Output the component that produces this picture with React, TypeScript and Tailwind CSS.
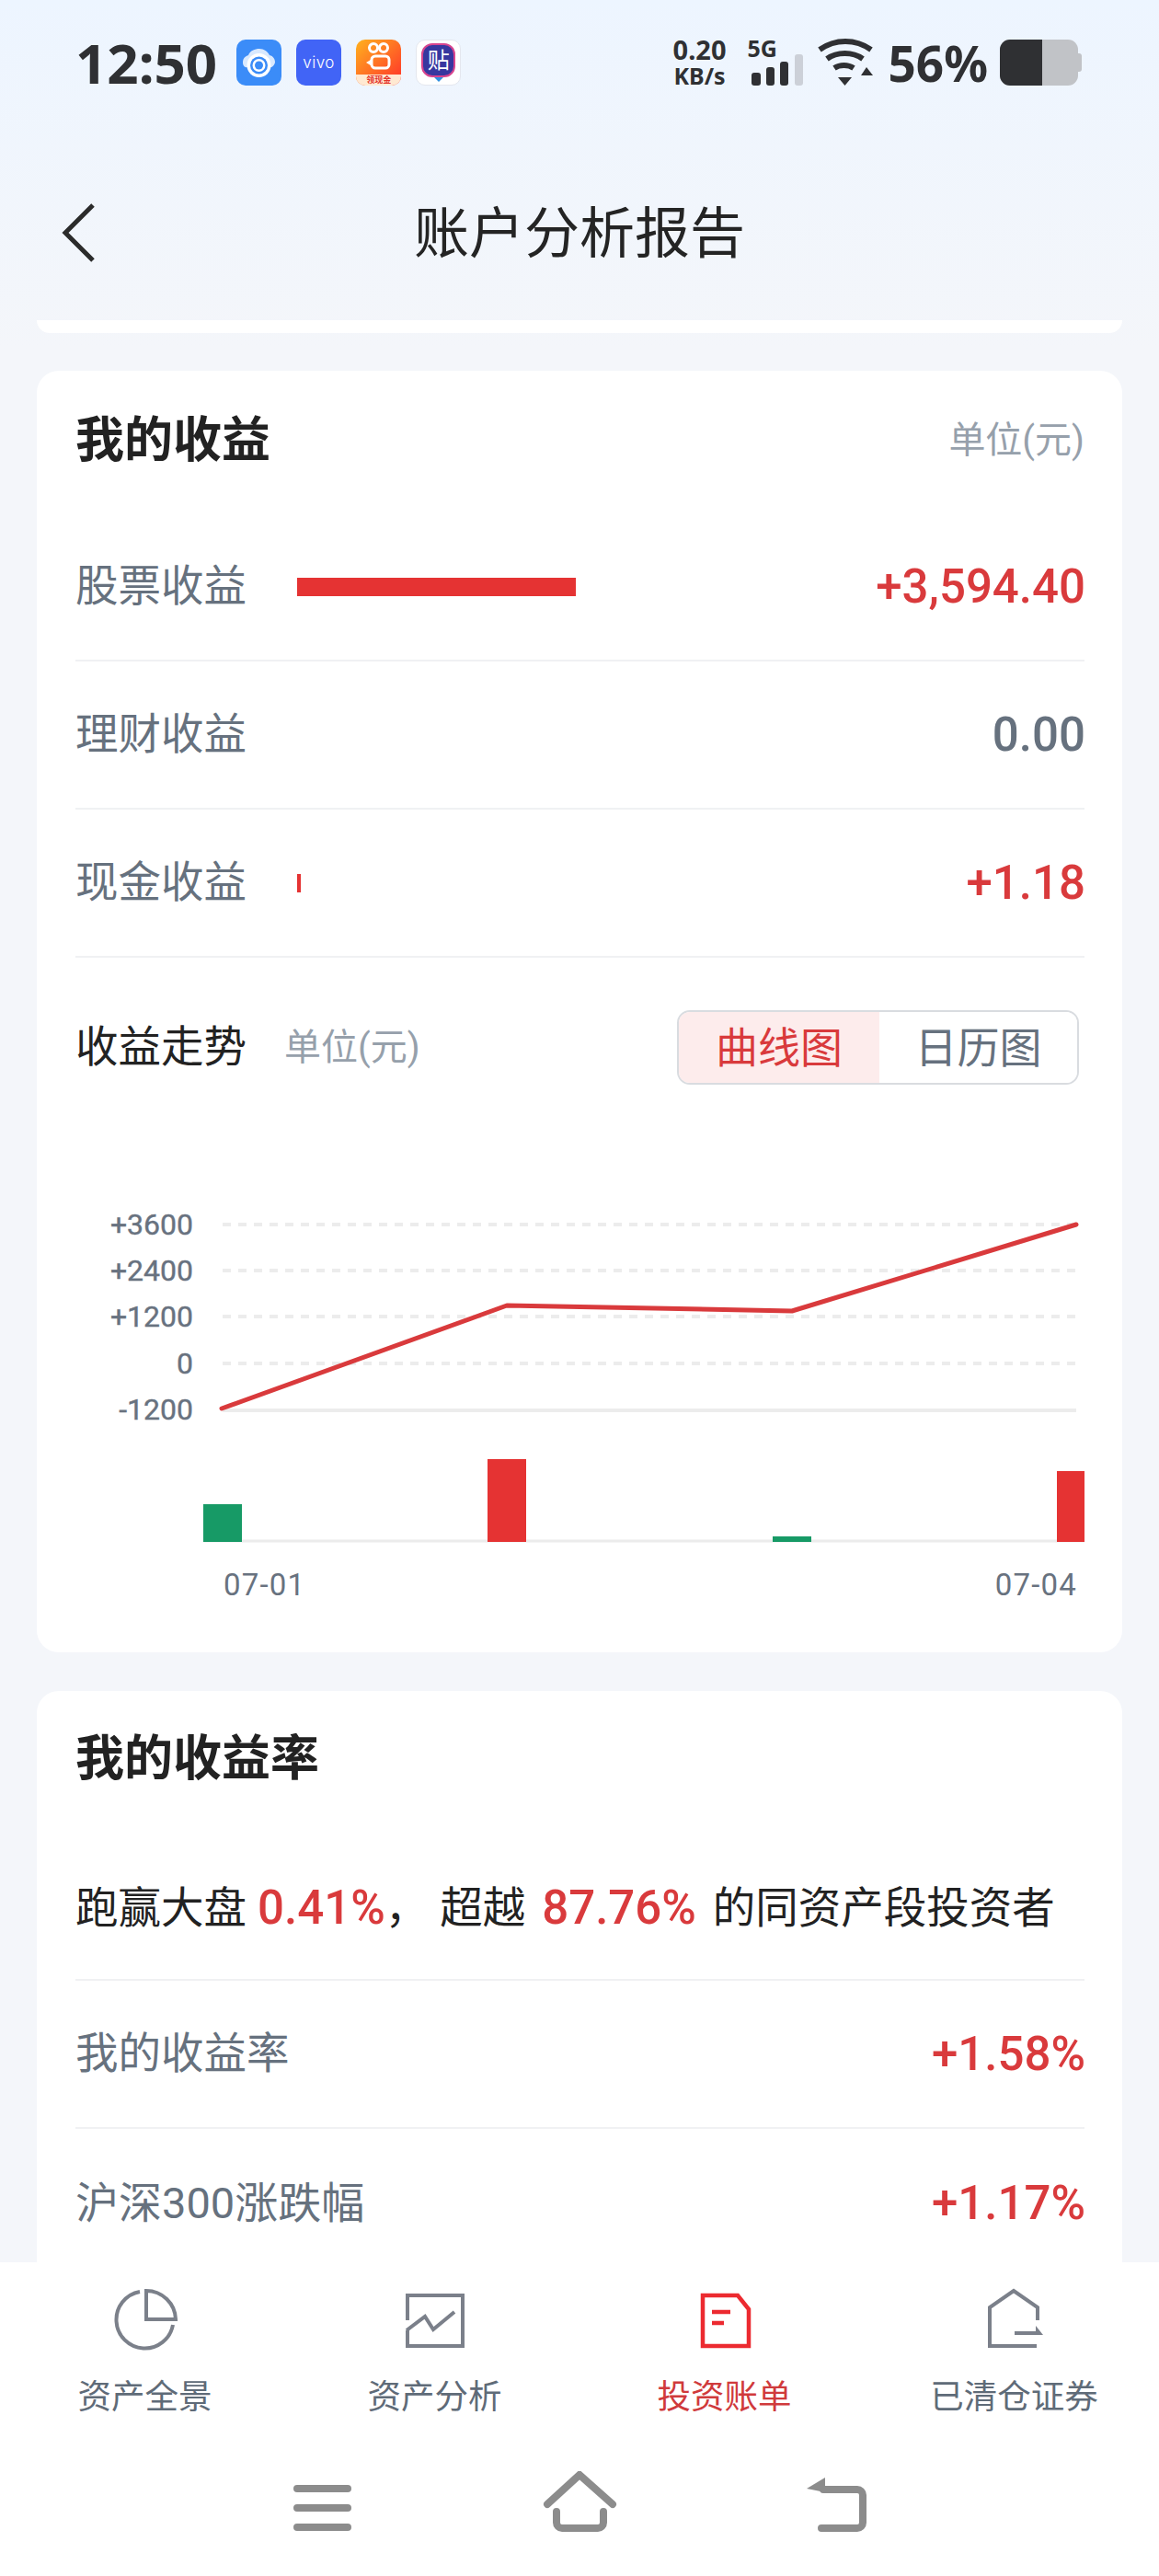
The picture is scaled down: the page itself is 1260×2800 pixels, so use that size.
const FONT = "font-['Roboto','Noto_Sans_CJK_SC',sans-serif]";

function Row({ label, value, tone, bar }: { label: string; value: string; tone: string; bar?: string }) {
  return (
    <div className="flex h-[161px] items-center border-b-2 border-[#f0f1f3]">
      <span className="w-[241px] shrink-0 text-[46.500px] leading-none whitespace-nowrap text-[#66717e]">{label}</span>
      {bar ? <div className={`h-[20px] bg-[#e53333] ${bar}`} /> : null}
      <span className={`-mr-[1px] ml-auto text-[51px] leading-none font-medium ${tone}`}>{value}</span>
    </div>
  );
}

function Chart() {
  const ys = [1331, 1381, 1431, 1482];
  const labels: [string, number][] = [["+3600", 1331], ["+2400", 1381], ["+1200", 1431], ["0", 1482], ["-1200", 1532]];
  return (
    <svg viewBox="40 1190 1181 570" className="block h-[570px] w-[1181px]">
      {ys.map((y) => (
        <line key={y} x1="242" x2="1170" y1={y} y2={y} stroke="#ececec" strokeWidth="4" strokeDasharray="9 8" />
      ))}
      <line x1="242" x2="1170" y1="1533" y2="1533" stroke="#ececec" strokeWidth="4" />
      {labels.map(([t, y]) => (
        <text key={t} x="210" y={y + 11} textAnchor="end" fontSize="32" fill="#68727f" fontFamily="Roboto" stroke="#68727f" strokeWidth="0.4">{t}</text>
      ))}
      <polyline points="241,1531 551,1419 861,1425 1170,1331" fill="none" stroke="#d93a3c" strokeWidth="5" strokeLinecap="round" strokeLinejoin="round" />
      <line x1="221" x2="1179" y1="1675" y2="1675" stroke="#ececec" strokeWidth="3" />
      <rect x="221" y="1635" width="42" height="41" fill="#179a66" />
      <rect x="530" y="1586" width="42" height="90" fill="#e53333" />
      <rect x="840" y="1670" width="42" height="6" fill="#179a66" />
      <rect x="1149" y="1599" width="30" height="77" fill="#e53333" />
      <text x="243" y="1734" fontSize="33" letterSpacing="1.200" fill="#68727f" fontFamily="Roboto">07-01</text>
      <text x="1171" y="1734" textAnchor="end" fontSize="33" letterSpacing="1.200" fill="#68727f" fontFamily="Roboto">07-04</text>
    </svg>
  );
}

function StatusIcons() {
  return (
    <div className="ml-[21px] flex gap-[16px]">
      <div className="flex h-[50px] w-[49px] items-center justify-center rounded-[10px] bg-[#3b8cf8]">
        <svg viewBox="0 0 49 50" className="h-[50px] w-[49px]">
          <path d="M7 25c0-5 3-7 6-8 2-5 7-7 12-7s9 3 11 7c4 1 6 4 6 8-1 3-3 6-6 5l-24 0c-3 1-5-2-5-5z" fill="#d9e9fe" />
          <circle cx="24.5" cy="28" r="13" fill="#fff" />
          <circle cx="24.5" cy="28" r="9.500" fill="#3b8cf8" />
          <circle cx="24.5" cy="28" r="7" fill="#fff" />
          <circle cx="24.5" cy="28" r="4.500" fill="#3b8cf8" />
        </svg>
      </div>
      <div className="flex h-[50px] w-[49px] items-center justify-center rounded-[10px] bg-[#4164f6] font-['Inter',sans-serif] text-[17px] leading-none font-light tracking-[0.5px] text-white">vivo</div>
      <div className="flex h-[50px] w-[49px] flex-col overflow-hidden rounded-[10px] bg-[linear-gradient(135deg,#ffb21e,#ff2e2a)]">
        <svg viewBox="0 0 49 38" className="h-[38px] w-[49px] shrink-0">
          <circle cx="19" cy="9" r="4.500" fill="none" stroke="#fff" strokeWidth="3" />
          <circle cx="30" cy="9" r="4.500" fill="none" stroke="#fff" strokeWidth="3" />
          <rect x="17" y="18" width="19" height="13" rx="4" fill="none" stroke="#fff" strokeWidth="3" />
          <path d="M16 22l-5 3 5 3" fill="#fff" />
        </svg>
        <div className="flex h-[12px] items-center justify-center bg-[#ffe9d2] text-[9px] leading-none font-bold text-[#e4332a]">领现金</div>
      </div>
      <div className="flex h-[50px] w-[49px] flex-col items-center justify-center rounded-[10px] border border-[#e4e7ee] bg-white">
        <div className="flex h-[37px] w-[37px] items-center justify-center rounded-[12px] border-2 border-[#d8458f] bg-[#37379f] text-[24px] leading-none text-white">贴</div>
        <svg viewBox="0 0 10 5" className="h-[5px] w-[10px]">
          <path d="M0 0h10L5 5z" fill="#2f8fe0" />
        </svg>
      </div>
    </div>
  );
}

function StatusRight() {
  return (
    <div className="flex h-[50px] items-center text-[#2f3033]">
      <div className="flex w-[66px] flex-col items-center font-['Noto_Sans',sans-serif] font-bold">
        <span className="text-[29px] leading-[28px]">0.20</span>
        <span className="text-[25px] leading-[28px]">KB/s</span>
      </div>
      <div className="relative ml-[16px] h-[56px] w-[70px]">
        <span className="absolute top-[0px] left-[3px] font-['Noto_Sans',sans-serif] text-[25px] leading-[24px] font-bold">5G</span>
        <svg viewBox="810 40 70 56" className="h-[56px] w-[70px]">
          <rect x="817" y="79" width="10" height="14" rx="3" fill="#2f3033" />
          <rect x="833" y="73" width="9" height="20" rx="3" fill="#2f3033" />
          <rect x="848" y="67" width="9" height="26" rx="3" fill="#2f3033" />
          <rect x="864" y="59" width="9" height="34" rx="3" fill="#ccd0d8" />
        </svg>
      </div>
      <svg viewBox="886 40 66 56" className="ml-[6px] h-[56px] w-[66px]">
        <path d="M891 54c17-12 39-12 56 0" fill="none" stroke="#2f3033" strokeWidth="6" />
        <path d="M899 64c11-8 28-8 39 0" fill="none" stroke="#2f3033" strokeWidth="6" />
        <path d="M907 74c6-4 15-4 21 0" fill="none" stroke="#2f3033" strokeWidth="6" />
        <path d="M911 84h15l-7.500 9z" fill="#2f3033" />
        <path d="M936 82l6-9 7 9z" fill="#2f3033" />
      </svg>
      <span className="ml-[14px] font-['Noto_Sans',sans-serif] text-[53px] leading-none font-bold">56%</span>
      <div className="ml-[13px] flex h-[50px] items-center">
        <div className="flex h-[50px] w-[85px] overflow-hidden rounded-[11px] bg-[#c1c3c7]">
          <div className="h-full w-[46px] bg-[#2f3033]" />
        </div>
        <div className="h-[20px] w-[4px] rounded-r-[3px] bg-[#c1c3c7]" />
      </div>
    </div>
  );
}

function NavItem({ label, active, children }: { label: string; active?: boolean; children: React.ReactNode }) {
  return (
    <div className="flex flex-col items-center">
      {children}
      <span className={`mt-[30px] text-[36.500px] leading-[36px] ${active ? "text-[#d03a3c]" : "text-[#5f6b78]"}`}>{label}</span>
    </div>
  );
}

export default function App() {
  return (
    <div className={`${FONT} flex h-[2800px] w-[1260px] flex-col overflow-hidden bg-[linear-gradient(180deg,#edf5ff_0px,#f4f6fa_380px)]`}>
      <div className="flex h-[158px] shrink-0 items-start justify-between pt-[43px] pr-[84px] pl-[82px]">
        <div className="flex h-[50px] items-center">
          <span className="font-['Noto_Sans',sans-serif] text-[60px] leading-none font-bold text-[#2f3033]">12:50</span>
          <StatusIcons />
        </div>
        <StatusRight />
      </div>

      <div className="grid h-[190px] shrink-0 grid-cols-[1fr_auto_1fr] items-center">
        <svg viewBox="0 0 40 66" className="ml-[66px] h-[66px] w-[40px]">
          <path d="M35 3 L5 33 L35 63" fill="none" stroke="#2b2b2b" strokeWidth="5" />
        </svg>
        <span className="pt-[3px] text-[60px] leading-none text-[#242424]">账户分析报告</span>
        <span />
      </div>

      <div className="min-h-0 flex-1 overflow-hidden px-[39px]">
        <div className="mx-[1px] h-[14px] rounded-b-[24px] bg-white" />

        <div className="mx-[1px] mt-[41px] h-[1393px] rounded-[24px] bg-white pr-[41px] pl-[42px]">
          <div className="flex h-[155px] items-start justify-between pt-[49px]">
            <span className="text-[53px] leading-[54px] font-bold text-[#222222]">我的收益</span>
            <span className="pt-[3px] text-[40px] leading-[48px] text-[#96a0ab]">单位(元)</span>
          </div>
          <Row label="股票收益" value="+3,594.40" tone="text-[#d93a3c]" bar="w-[303px]" />
          <Row label="理财收益" value="0.00" tone="text-[#66717e]" />
          <Row label="现金收益" value="+1.18" tone="text-[#d93a3c]" bar="w-[4px]" />
          <div className="flex items-center pt-[57px]">
            <span className="text-[46.500px] leading-none text-[#222222]">收益走势</span>
            <span className="ml-[41px] text-[40px] leading-none text-[#96a0ab]">单位(元)</span>
            <div className="mr-[6px] ml-auto flex h-[81px] w-[437px] overflow-hidden rounded-[14px] border-2 border-[#d9dce0]">
              <div className="flex w-[218px] items-center justify-center bg-[#fdecec] text-[46px] leading-none text-[#d93a3c]">曲线图</div>
              <div className="flex flex-1 items-center justify-center bg-white text-[46px] leading-none text-[#66717e]">日历图</div>
            </div>
          </div>
          <div className="mt-[11px] -ml-[42px]">
            <Chart />
          </div>
        </div>

        <div className="mx-[1px] mt-[42px] h-[700px] rounded-[24px] bg-white pr-[41px] pl-[42px]">
          <div className="flex h-[183px] items-start pt-[47px]">
            <span className="text-[53px] leading-[54px] font-bold text-[#222222]">我的收益率</span>
          </div>
          <div className="flex h-[132px] items-start border-b-2 border-[#f0f1f3] pt-[28px] text-[46.500px] leading-[50px] whitespace-nowrap text-[#222222]">
            <span>跑赢大盘</span>
            <span className="ml-[12px] text-[51px] font-medium text-[#d93a3c]">0.41%</span>
            <span>，</span>
            <span className="ml-[13px]">超越</span>
            <span className="ml-[18px] text-[51px] font-medium text-[#d93a3c]">87.76%</span>
            <span className="ml-[18px]">的同资产段投资者</span>
          </div>
          <Row label="我的收益率" value="+1.58%" tone="text-[#d93a3c]" />
          <div className="flex h-[161px] items-center">
            <span className="text-[47px] leading-none text-[#66717e]">沪深300涨跌幅</span>
            <span className="-mr-[1px] ml-auto text-[51px] leading-none font-medium text-[#d93a3c]">+1.17%</span>
          </div>
        </div>
      </div>

      <div className="h-[341px] shrink-0 bg-white pt-[27px]">
        <div className="grid grid-cols-4">
          <NavItem label="资产全景">
            <svg viewBox="0 0 72 72" className="h-[72px] w-[72px]" fill="none" stroke="#7b808a" strokeWidth="4">
              <path d="M30 5 A31 31 0 1 0 66 41" />
              <path d="M37 4 V35 H69 A32 32 0 0 0 37 4 Z" />
            </svg>
          </NavItem>
          <NavItem label="资产分析">
            <svg viewBox="0 0 72 72" className="h-[72px] w-[72px]" fill="none" stroke="#7b808a" strokeWidth="4">
              <path d="M6 36 V9 H66 V64 H6 V47" />
              <path d="M5 47 L25 32 L34 46 L57 27" />
            </svg>
          </NavItem>
          <NavItem label="投资账单" active>
            <svg viewBox="0 0 72 72" className="h-[72px] w-[72px]" fill="none" stroke="#ec2a30" strokeWidth="4.500">
              <path d="M12 9 H50 L62 24 V64 H12 Z" />
              <path d="M22 27 H42 M22 39 H35" />
            </svg>
          </NavItem>
          <NavItem label="已清仓证券">
            <svg viewBox="0 0 72 72" className="h-[72px] w-[72px]" fill="none" stroke="#7b808a" strokeWidth="4">
              <path d="M61 36 V22 L35 4 L9 22 V64 H60" />
              <path d="M36 50 H60" />
              <path d="M59 42 L67 52 H59 Z" fill="#7b808a" stroke="none" />
            </svg>
          </NavItem>
        </div>
        <div className="mt-[62px] flex justify-start pl-[315px]">
          <svg viewBox="315 2686 72 70" className="h-[70px] w-[72px]" fill="none" stroke="#8c8c8c" strokeWidth="8" strokeLinecap="round">
            <path d="M323 2705 H378 M323 2726 H378 M323 2747 H378" />
          </svg>
          <svg viewBox="586 2686 88 70" className="ml-[199px] h-[70px] w-[88px]" fill="none" stroke="#8c8c8c" strokeWidth="8" strokeLinecap="round">
            <path d="M595 2722 L630 2690 L666 2722" />
            <path d="M605 2730 V2742 a6 6 0 0 0 6 6 H650 a6 6 0 0 0 6 -6 V2730" />
          </svg>
          <svg viewBox="873 2686 74 70" className="ml-[199px] h-[70px] w-[74px]" fill="none" stroke="#8c8c8c" strokeWidth="8" strokeLinecap="round">
            <path d="M895 2706 H932 a6 6 0 0 1 6 6 V2742 a6 6 0 0 1 -6 6 H893" />
            <path d="M897 2693 L877 2705 L897 2709 Z" fill="#8c8c8c" stroke="none" />
          </svg>
        </div>
      </div>
    </div>
  );
}
